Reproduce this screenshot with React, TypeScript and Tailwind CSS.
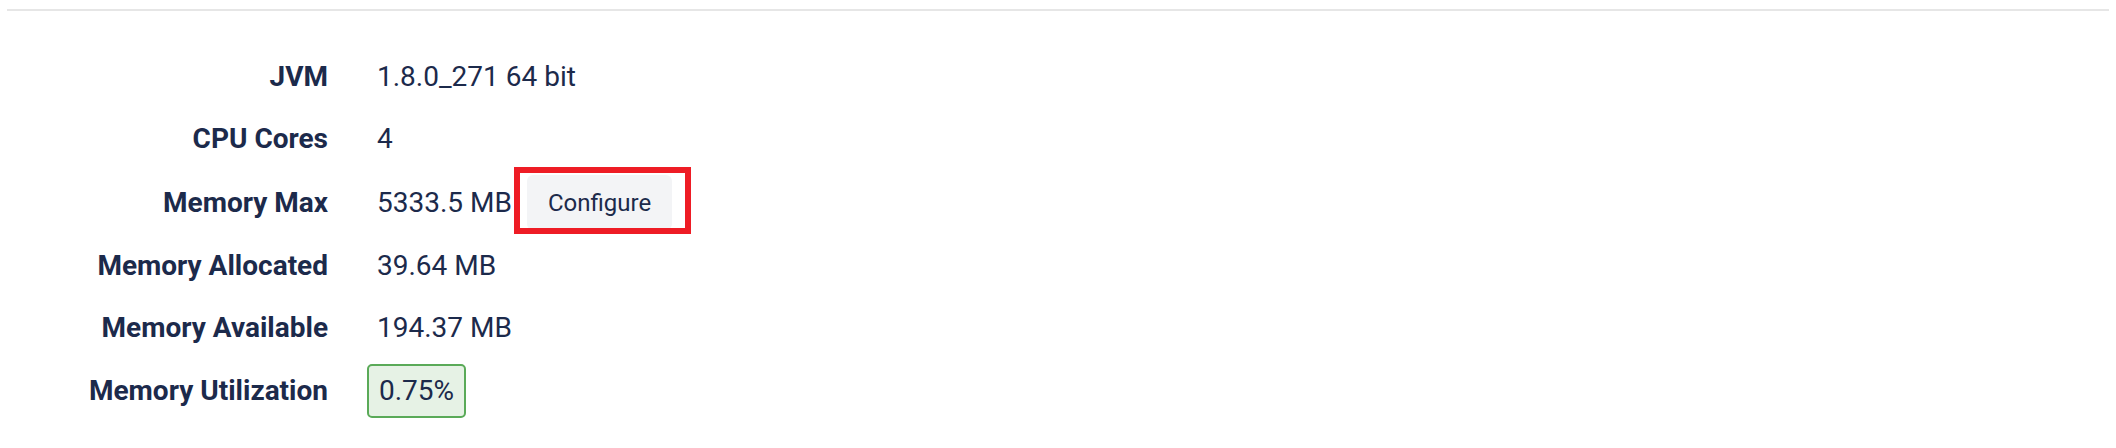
import React from "react";

function Row({ label, children }: { label: string; children: React.ReactNode }) {
  return (
    <div className="flex items-center min-h-[62px] py-[5px]">
      <div className="w-[328px] shrink-0 text-right font-bold">{label}</div>
      <div className="ml-[49px] flex items-center">{children}</div>
    </div>
  );
}

export default function App() {
  return (
    <div className="w-[2116px] h-[448px] bg-white text-[#1c2a4b] text-[28px] leading-[32px] overflow-hidden" style={{ fontFamily: "Roboto, 'Liberation Sans', sans-serif" }}>
      <div className="pt-[9px] px-[7px]">
        <div className="h-[2px] bg-[#e6e6e6]" />
      </div>
      <div className="mt-[35px] flex flex-col">
        <Row label="JVM">1.8.0_271 64 bit</Row>
        <Row label="CPU Cores">4</Row>
        <Row label="Memory Max">
          <span>5333.5 MB</span>
          <div className="relative ml-[15px]">
            <button className="h-[55px] px-[21px] rounded-[6px] bg-[#f3f4f6] text-[24px] text-[#1c2a4b]">
              Configure
            </button>
            <div className="absolute left-[-13px] top-[-8px] right-[-19px] bottom-[-4px] border-[6px] border-[#ee1c25] pointer-events-none" />
          </div>
        </Row>
        <Row label="Memory Allocated">39.64 MB</Row>
        <Row label="Memory Available">194.37 MB</Row>
        <Row label="Memory Utilization">
          <span className="ml-[-10px] h-[54px] px-[10px] flex items-center rounded-[5px] border-2 border-[#5aaa58] bg-[#e6f2e5]">
            0.75%
          </span>
        </Row>
      </div>
    </div>
  );
}
